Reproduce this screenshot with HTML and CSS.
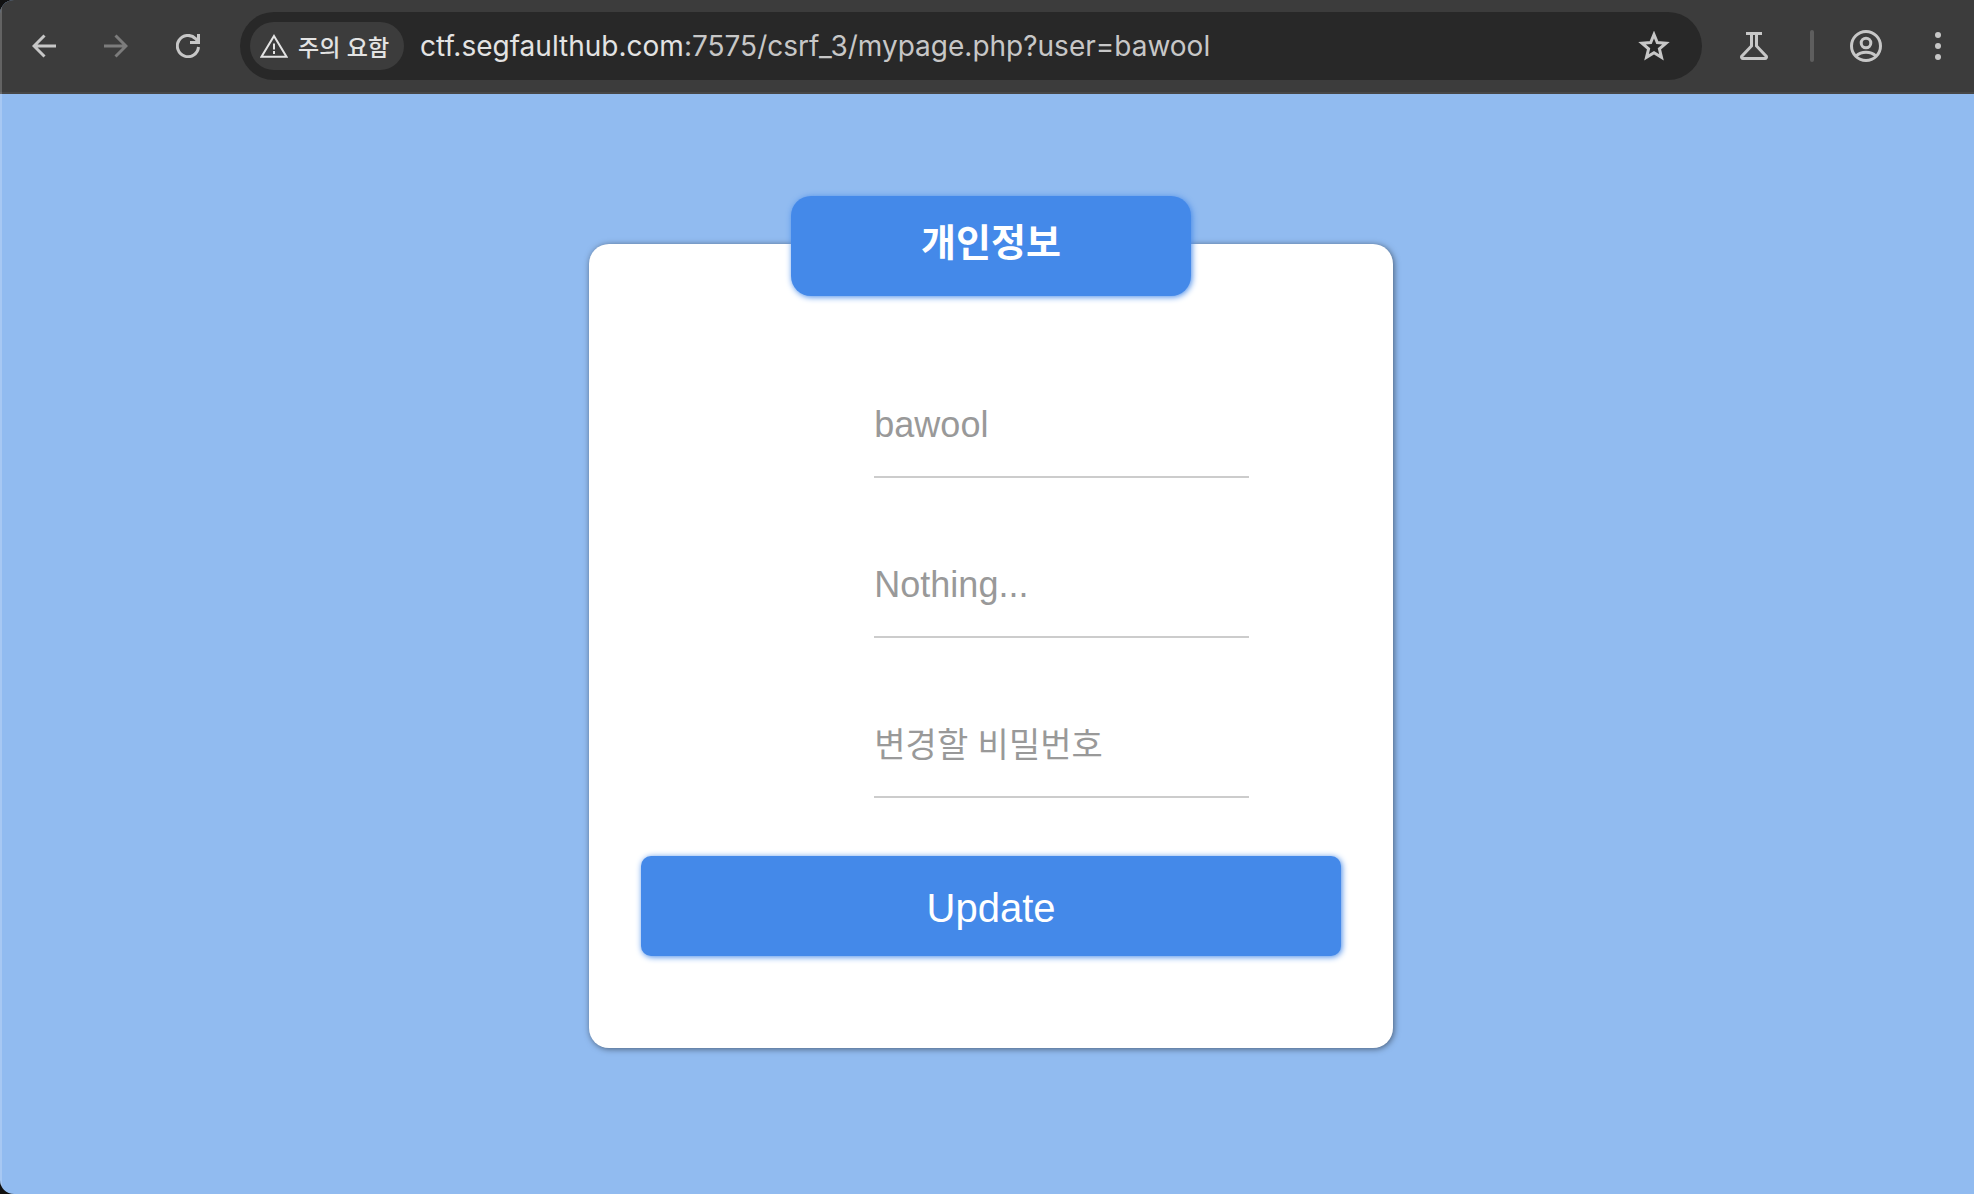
FILE: index.html
```
<!DOCTYPE html>
<html lang="ko">
<head>
    <meta charset="UTF-8">
    <meta name="viewport" content="width=device-width, initial-scale=1.0">
    <title>개인정보</title>
    <link rel="stylesheet" href="styles.css">
</head>
<body>
    <div class="window">
        <header class="toolbar">
            <button type="button" class="tool" aria-label="뒤로">
                <svg width="24" height="24" viewBox="0 0 24 24"><path d="M24 12H2M12.500 1.500L2 12l10.500 10.500"/></svg>
            </button>
            <button type="button" class="tool" aria-label="앞으로" disabled>
                <svg width="24" height="24" viewBox="0 0 24 24"><path d="M0 12h22M11.500 1.500L22 12 11.500 22.500"/></svg>
            </button>
            <button type="button" class="tool" aria-label="새로고침">
                <svg width="24" height="24" viewBox="0 0 24 24"><path d="M22.500 13A10.600 10.600 0 1 1 19.500 4.600L22 7.500M22.500 0v8.500H14"/></svg>
            </button>
            <div class="omnibox">
                <button type="button" class="chip">
                    <svg class="warning" width="28" height="24" viewBox="0 0 28 24"><path d="M14 2L26.500 22.800h-25z"/><path d="M14 9.500v6M14 17v3"/></svg>
                    <span>주의 요함</span>
                </button>
                <div class="url"><span class="host">ctf.segfaulthub.com</span>:7575/csrf_3/mypage.php?user=bawool</div>
                <button type="button" class="star" aria-label="북마크">
                    <svg width="32" height="30" viewBox="0 0 32 30"><path d="M16 3.500l3.300 8 8.700.7-6.600 5.600 2.100 8.600L16 21.800l-7.500 4.600 2.100-8.600L4 12.200l8.700-.7z"/></svg>
                </button>
            </div>
            <button type="button" class="tool" aria-label="실험실">
                <svg width="28" height="28" viewBox="0 0 28 28"><path d="M6 1.500h16M11.500 2v12L1.800 24.200c-.7 1 .1 2.300 1.200 2.300h22c1.100 0 1.900-1.300 1.200-2.300L16.500 14V2"/></svg>
            </button>
            <span class="divider"></span>
            <button type="button" class="tool" aria-label="프로필">
                <svg width="32" height="32" viewBox="0 0 32 32"><circle cx="16" cy="16" r="14.500"/><circle cx="16" cy="13" r="4.800"/><path d="M6 26c5.500-5 14.500-5 20 0"/></svg>
            </button>
            <button type="button" class="tool" aria-label="메뉴">
                <svg class="dots" width="6" height="28" viewBox="0 0 6 28"><circle cx="3" cy="3" r="3"/><circle cx="3" cy="14" r="3"/><circle cx="3" cy="25" r="3"/></svg>
            </button>
        </header>
        <main class="page">
            <div class="card">
                <h1>개인정보</h1>
                <form id="updateForm">
                    <div class="field">
                        <input type="text" name="id" placeholder="bawool" aria-label="아이디">
                    </div>
                    <div class="field">
                        <input type="text" name="info" placeholder="Nothing..." aria-label="정보">
                    </div>
                    <div class="field">
                        <input type="password" id="pw" name="pw" placeholder="변경할 비밀번호" aria-label="변경할 비밀번호">
                    </div>
                    <button type="submit" class="update">Update</button>
                </form>
            </div>
        </main>
    </div>
</body>
</html>
```
FILE: styles.css
```
* {
    box-sizing: border-box;
}
html {
    background-color: #111;
}
body {
    margin: 0;
    font-family: "Liberation Sans", "Noto Sans CJK KR", Arial, sans-serif;
}
button {
    border: none;
    padding: 0;
    background: none;
    cursor: pointer;
}

/* browser window */
.window {
    position: relative;
    display: flex;
    flex-direction: column;
    min-height: 100vh;
    overflow: hidden;
    border-radius: 14px 0 0 14px;
    background-color: #91bbf0;
}
.window::after {
    content: "";
    position: absolute;
    top: 0;
    bottom: 0;
    left: 0;
    width: 2px;
    background-color: rgba(255, 255, 255, 0.2);
}
.toolbar {
    display: flex;
    align-items: center;
    height: 94px;
    padding-left: 8px;
    background-color: #3c3c3c;
    border-bottom: 2px solid #474747;
}
.tool {
    display: flex;
    align-items: center;
    justify-content: center;
    flex: none;
    width: 72px;
    height: 72px;
    color: #c7c7c7;
}
.tool:disabled {
    color: #7c7c7c;
}
svg {
    fill: none;
    stroke: currentColor;
    stroke-width: 3px;
}
.warning {
    stroke-width: 2px;
}
.dots {
    fill: currentColor;
    stroke: none;
}
.omnibox {
    display: flex;
    align-items: center;
    flex: 1;
    min-width: 0;
    height: 68px;
    margin: 0 16px;
    padding: 0 32px 0 10px;
    border-radius: 34px;
    background-color: #282828;
}
.chip {
    display: flex;
    align-items: center;
    flex: none;
    gap: 10px;
    height: 48px;
    padding: 0 15px 0 10px;
    border-radius: 24px;
    background-color: #3c3c3c;
    color: #e3e3e3;
    font-family: "Noto Sans CJK KR", sans-serif;
    font-size: 23px;
    font-weight: 500;
}
.url {
    flex: 1;
    min-width: 0;
    margin-left: 16px;
    overflow: hidden;
    white-space: nowrap;
    font-family: Inter, Roboto, sans-serif;
    font-size: 28px;
    color: #c7c7c7;
}
.host {
    color: #e3e3e3;
}
.star {
    display: flex;
    color: #c7c7c7;
}
.divider {
    flex: none;
    width: 4px;
    height: 32px;
    margin: 0 16px 0 20px;
    border-radius: 2px;
    background-color: #5e5e5e;
}

/* my page */
.page {
    flex: 1;
    padding: 150px 0 100px 8px;
}
.card {
    width: 100%;
    max-width: 804px;
    margin: 0 auto;
    padding: 0 52px 92px;
    border-radius: 20px;
    background-color: #fff;
    box-shadow: 1px 1px 6px rgba(0, 0, 0, 0.5);
}
h1 {
    position: relative;
    top: -48px;
    width: 400px;
    height: 100px;
    margin: 0 auto;
    border-radius: 20px;
    background-color: #4489e9;
    box-shadow: 1px 1px 6px #4489e9;
    color: #fff;
    font-size: 38px;
    line-height: 94px;
    text-align: center;
}
form {
    display: flex;
    flex-direction: column;
    gap: 54px;
    padding-top: 28px;
}
.field {
    padding-left: calc(100% / 3);
}
input {
    display: block;
    width: 100%;
    max-width: 375px;
    height: 106px;
    padding: 2px 0 0;
    border: none;
    border-bottom: 2px solid #ccc;
    outline: none;
    background: none;
    font-family: inherit;
    font-size: 36px;
}
#pw {
    font-size: 34px;
}
input::placeholder {
    color: #999;
}
.update {
    height: 100px;
    margin-top: 4px;
    padding-top: 4px;
    border-radius: 10px;
    background-color: #4489e9;
    box-shadow: 1px 1px 6px #4489e9;
    color: #fff;
    font-family: inherit;
    font-size: 40px;
}
```
